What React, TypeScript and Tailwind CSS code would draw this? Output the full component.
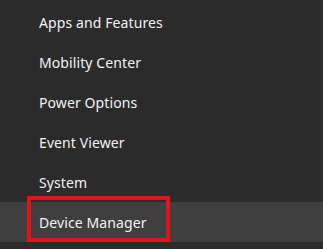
import React from "react";

const items = [
  "Apps and Features",
  "Mobility Center",
  "Power Options",
  "Event Viewer",
  "System",
  "Device Manager",
];

export default function App() {
  return (
    <div
      className="w-[323px] h-[249px] bg-[#2b2b2b] pt-[2px] overflow-hidden"
      style={{ fontFamily: '"Noto Sans", "Open Sans", sans-serif' }}
    >
      <ul>
        {items.map((label, i) => {
          const active = i === items.length - 1;
          return (
            <li
              key={label}
              className={
                active
                  ? "relative h-10 flex items-center pl-[39px] bg-[#3f3f3f] text-[14px] tracking-[0.1px] text-[#f2f2f2]"
                  : "relative h-10 flex items-center pl-[39px] text-[14px] tracking-[0.1px] text-[#f2f2f2]"
              }
            >
              {label}
              {active && (
                <span className="absolute left-[27px] top-[-6px] w-[143px] h-[46px] border-[4px] border-[#e0141b]" />
              )}
            </li>
          );
        })}
      </ul>
    </div>
  );
}
